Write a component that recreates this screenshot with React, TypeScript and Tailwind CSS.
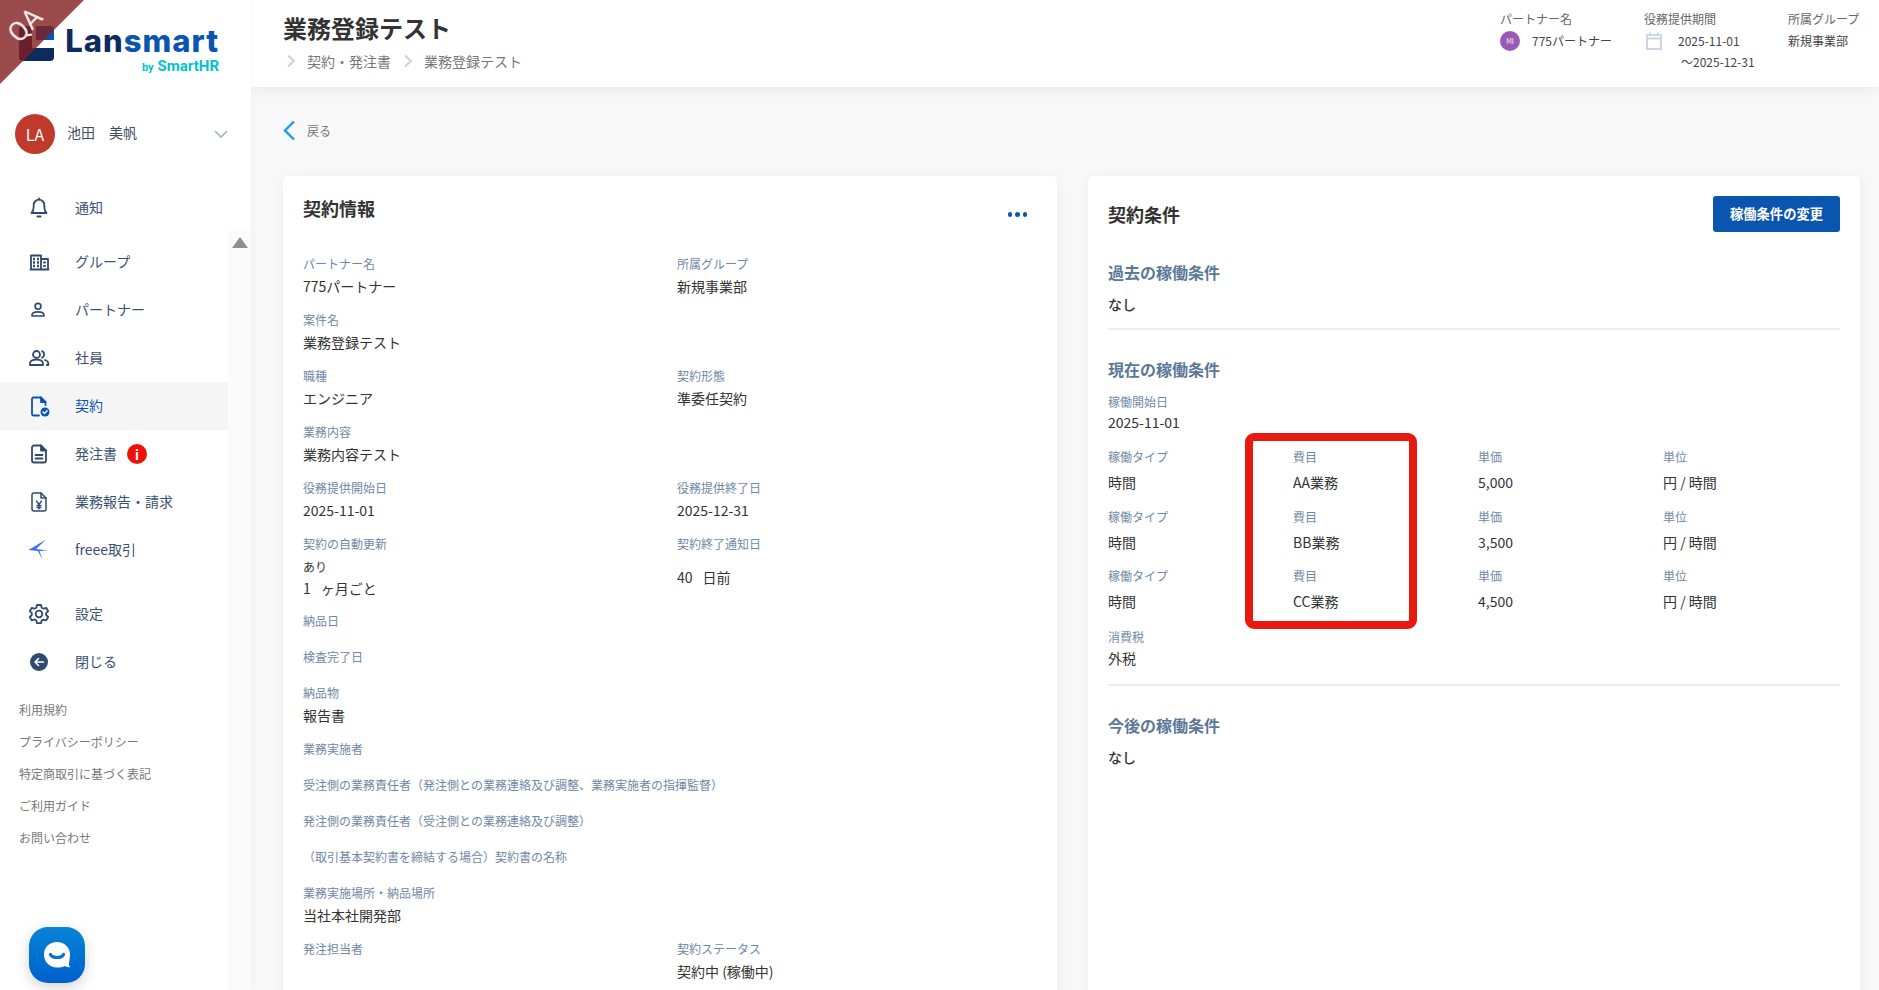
import React from "react";

const FONT = "[font-family:'Noto_Sans_CJK_JP','Noto_Sans',sans-serif]";
const NAV = "#2f4a70";

function Svg({ children, color = NAV, size = 24 }: { children: React.ReactNode; color?: string; size?: number }) {
  return (
    <svg width={size} height={size} viewBox="0 0 24 24" fill="none" stroke={color} strokeWidth="1.8" strokeLinecap="round" strokeLinejoin="round">
      {children}
    </svg>
  );
}

const icons: Record<string, React.ReactNode> = {
  bell: (
    <Svg>
      <path d="M4.500 17h15c-1.500-1.500-2.200-3-2.200-6.500V9a5.300 5.300 0 0 0-10.600 0v1.500c0 3.500-.7 5-2.200 6.500z" />
      <path d="M10.500 20.500h3" strokeWidth="2" />
      <path d="M12 2.500v1" />
    </Svg>
  ),
  building: (
    <Svg>
      <path d="M4 19.500V5.500h10v14M14 9h7v10.500M3.500 19.500h18" />
      <path d="M7 8.500v1M11 8.500v1M7 12v1M11 12v1M7 15.500v1M11 15.500v1M17 12.500h1M17 16h1" strokeWidth="2" />
    </Svg>
  ),
  user: (
    <Svg size={22}>
      <circle cx="12" cy="8" r="3.200" />
      <path d="M5.500 18.500v-1c0-2 2.500-3.500 6.500-3.500s6.500 1.500 6.500 3.500v1z" />
    </Svg>
  ),
  users: (
    <Svg>
      <circle cx="9.500" cy="8.500" r="3.500" />
      <path d="M3 19v-1.500c0-2.300 2.700-3.800 6.500-3.800s6.500 1.500 6.500 3.800V19z" />
      <path d="M15 5.200a3.500 3.500 0 0 1 0 6.500M18 14c2 .6 3.300 1.800 3.300 3.500V19h-1.500" />
    </Svg>
  ),
  contract: (
    <Svg color="#0a55b0">
      <path d="M14 3.500H6.500a1.500 1.500 0 0 0-1.500 1.500v15a1.500 1.500 0 0 0 1.500 1.500H12" />
      <path d="M14 3.500V8h4.500L14 3.500z" fill="#0a55b0" />
      <path d="M18.500 8v3" />
      <circle cx="18" cy="18" r="4.500" fill="#0a55b0" stroke="none" />
      <path d="M16 18l1.500 1.500 2.600-2.800" stroke="#fff" strokeWidth="1.400" />
    </Svg>
  ),
  doc: (
    <Svg>
      <path d="M14 3.500H7a2 2 0 0 0-2 2v13a2 2 0 0 0 2 2h10a2 2 0 0 0 2-2V8.500L14 3.500z" />
      <path d="M14 3.500v5h5" fill={NAV} />
      <path d="M8.500 13h7M8.500 16.500h7" />
    </Svg>
  ),
  yen: (
    <Svg>
      <path d="M14 3H7a2 2 0 0 0-2 2v14a2 2 0 0 0 2 2h10a2 2 0 0 0 2-2V8l-5-5z" strokeWidth="1.500" />
      <path d="M14 3v5h5" strokeWidth="1.500" />
      <path d="M9.500 11l2.500 3.500 2.500-3.500M12 14.500V19M10 15.500h4M10 17.500h4" strokeWidth="1.300" />
    </Svg>
  ),
  freee: (
    <svg width="24" height="24" viewBox="0 0 24 24" fill="#3d6ff0">
      <path d="M19 1.500 1.500 12 11 13 15.500 22 12.500 13 21 12.500 9 11z" />
    </svg>
  ),
  gear: (
    <Svg>
      <path d="M10 3h4l.7 2.800 1.800.9 2.700-.9 2 3.400-2.100 2 .1 1.800 2 2-2 3.400-2.700-.8-1.800 1-.7 2.600h-4l-.7-2.700-1.800-1-2.700.9-2-3.400 2-2v-1.900l-2-1.900 2-3.400 2.700.9 1.800-1z" />
      <circle cx="12" cy="12" r="3.300" />
    </Svg>
  ),
  close: (
    <svg width="24" height="24" viewBox="0 0 24 24">
      <circle cx="12" cy="12" r="9" fill={NAV} />
      <path d="M16.500 12h-8M11.500 8.500 8 12l3.500 3.500" stroke="#fff" strokeWidth="1.600" fill="none" strokeLinecap="round" strokeLinejoin="round" />
    </svg>
  ),
};

function NavItem({ icon, label, active, badge, className = "" }: { icon: string; label: string; active?: boolean; badge?: boolean; className?: string }) {
  return (
    <div className={`flex h-[48px] w-[228px] items-center pl-[27px] ${active ? "bg-[#f5f5f5]" : ""} ${className}`}>
      <span className="flex w-[48px] shrink-0 items-center">{icons[icon]}</span>
      <span className={`-mt-[1px] text-[14px] ${active ? "text-[#0a55b0]" : "text-[#3a5274]"}`}>{label}</span>
      {badge && (
        <span className="ml-[10px] flex h-[20px] w-[20px] items-center justify-center rounded-full bg-[#ec1208] text-[13px] font-bold leading-none text-white">i</span>
      )}
    </div>
  );
}

function Field({ label, value, className = "", gap = "mt-[3px]" }: { label: string; value?: React.ReactNode; className?: string; gap?: string }) {
  return (
    <div className={className}>
      <div className="h-[18px] text-[12px] leading-[18px] text-[#6f88a6]">{label}</div>
      {value !== undefined && <div className={`${gap} h-[20px] text-[14px] leading-[20px] text-[#333]`}>{value}</div>}
    </div>
  );
}

function Row({ l, r, value, lv }: { l: string; r?: string; value?: string; lv?: string }) {
  return (
    <div className="mb-[15px] grid grid-cols-[374px_1fr]">
      <Field label={l} value={lv} />
      {r ? <Field label={r} value={value} /> : <div />}
    </div>
  );
}

function Blank({ label }: { label: string }) {
  return <div className="mb-[18px]"><Field label={label} /></div>;
}

function Rate({ label, value }: { label: string; value: string }) {
  return (
    <div>
      <div className="h-[18px] text-[12px] leading-[18px] text-[#6f88a6]">{label}</div>
      <div className="mt-[6px] h-[20px] text-[14px] leading-[20px] text-[#333]">{value}</div>
    </div>
  );
}

function RateRow({ name, price, mb }: { name: string; price: string; mb: string }) {
  return (
    <div className={`grid grid-cols-[185px_185px_185px_1fr] ${mb}`}>
      <Rate label="稼働タイプ" value="時間" />
      <Rate label="費目" value={name} />
      <Rate label="単価" value={price} />
      <Rate label="単位" value="円 / 時間" />
    </div>
  );
}

function SectionTitle({ children }: { children: React.ReactNode }) {
  return <div className="h-[24px] text-[16px] font-bold leading-[24px] text-[#5b7898]">{children}</div>;
}

function Chevron({ className = "" }: { className?: string }) {
  return (
    <svg width="10" height="14" viewBox="0 0 10 14" fill="none" stroke="#c5d3e3" strokeWidth="2" className={className}>
      <path d="M2 1.500 8 7l-6 5.500" />
    </svg>
  );
}

export default function App() {
  return (
    <div className={`relative flex h-[990px] w-full overflow-hidden bg-[#f8f8f8] ${FONT}`}>
      <aside className="relative z-10 h-full w-[251px] shrink-0 bg-white shadow-[0_0_8px_rgba(0,0,0,0.04)]">
        <div className="absolute bottom-0 left-[228px] top-[230px] w-[23px] bg-[#fbfbfb]">
          <div className="ml-[4px] mt-[7px] h-0 w-0 border-x-[8px] border-b-[11px] border-x-transparent border-b-[#8f8f8f]" />
        </div>

        <div className="flex h-[87px] items-start pl-[19px] pt-[26px]">
          <svg width="35" height="35" viewBox="0 0 35 35" className="shrink-0">
            <path d="M17 0h14a4 4 0 0 1 4 4v10H17z" fill="#0a55b0" />
            <path d="M0 4a4 4 0 0 1 4-4h9v22h22v9a4 4 0 0 1-4 4H4a4 4 0 0 1-4-4z" fill="#0d2b5e" />
            <path d="M13 18h22v4H13z" fill="#fff" />
          </svg>
          <div className="ml-[12px] flex w-[153px] flex-col items-end">
            <div className="-mt-[3px] h-[36px] whitespace-nowrap text-[31px] font-extrabold leading-[36px] tracking-[1px] [font-family:'Inter',sans-serif]">
              <span className="text-[#0d2b5e]">Lan</span>
              <span className="text-[#0a55b0]">smart</span>
            </div>
            <div className="-mt-[1px] flex items-baseline whitespace-nowrap font-bold leading-[16px] text-[#00c3d0] [font-family:'Roboto',sans-serif]">
              <span className="mr-[4px] text-[11px]">by</span>
              <span className="text-[15px]">SmartHR</span>
            </div>
          </div>
        </div>

        <div className="mt-[27px] flex h-[40px] items-center pl-[15px]">
          <div className="flex h-[40px] w-[40px] items-center justify-center rounded-full bg-[#c0392b] pb-[1px] text-[16px] text-white">LA</div>
          <span className="-mt-[3px] ml-[12px] w-[147px] text-[14px] text-[#3f4d60]">池田　美帆</span>
          <svg width="14" height="9" viewBox="0 0 14 9" fill="none" stroke="#a9b1bb" strokeWidth="1.600"><path d="M1 1l6 6 6-6" /></svg>
        </div>

        <nav className="mt-[30px]">
          <NavItem icon="bell" label="通知" className="mb-[6px]" />
          <NavItem icon="building" label="グループ" />
          <NavItem icon="user" label="パートナー" />
          <NavItem icon="users" label="社員" />
          <NavItem icon="contract" label="契約" active />
          <NavItem icon="doc" label="発注書" badge />
          <NavItem icon="yen" label="業務報告・請求" />
          <NavItem icon="freee" label="freee取引" />
          <NavItem icon="gear" label="設定" className="mt-[16px]" />
          <NavItem icon="close" label="閉じる" />
        </nav>

        <div className="mt-[8px] pl-[19px]">
          {["利用規約", "プライバシーポリシー", "特定商取引に基づく表記", "ご利用ガイド", "お問い合わせ"].map((t) => (
            <div key={t} className="h-[32px] text-[12px] leading-[32px] text-[#777]">{t}</div>
          ))}
        </div>

        <div className="absolute left-[29px] top-[927px] flex h-[56px] w-[56px] items-center justify-center rounded-[19px] bg-gradient-to-b from-[#0a84d6] to-[#0060cc] shadow-[0_4px_14px_rgba(0,0,0,0.18)]">
          <svg width="32" height="32" viewBox="0 0 32 32">
            <path d="M16 3c7.500 0 13 5.500 13 12.500 0 3.500-1 6.500-1 10 0 1 .5 2 1.500 2.500-2.500.5-4.500 0-5.500-1-2 1-5 1.500-8 1.500C8.500 28.500 3 23 3 15.500S8.500 3 16 3z" fill="#fff" />
            <path d="M9.500 15.500c2 4 11 4 13 0" stroke="#0a72d2" strokeWidth="3.200" fill="none" strokeLinecap="round" />
          </svg>
        </div>
      </aside>

      <main className="flex min-w-0 flex-1 flex-col">
        <header className="relative z-[5] flex h-[87px] shrink-0 justify-between bg-white pl-[32px] shadow-[0_2px_12px_rgba(0,0,0,0.07)]">
          <div>
            <h1 className="mt-[10px] h-[36px] text-[24px] font-bold leading-[36px] text-[#333]">業務登録テスト</h1>
            <div className="mt-[4px] flex h-[22px] items-center text-[14px] text-[#777]">
              <Chevron className="ml-[3px]" />
              <span className="ml-[11px]">契約・発注書</span>
              <Chevron className="ml-[12px]" />
              <span className="ml-[11px]">業務登録テスト</span>
            </div>
          </div>
          <div className="flex pr-[19px] pt-[10px] text-[12px] text-[#444]">
            <div className="w-[144px]">
              <div className="h-[18px] leading-[18px] text-[#666]">パートナー名</div>
              <div className="mt-[3px] flex h-[20px] items-center">
                <span className="flex h-[20px] w-[20px] items-center justify-center rounded-full bg-[#9b59b6] text-[7px] text-[#eee]">MI</span>
                <span className="ml-[12px]">775パートナー</span>
              </div>
            </div>
            <div className="w-[144px]">
              <div className="h-[18px] leading-[18px] text-[#666]">役務提供期間</div>
              <div className="mt-[3px] flex h-[20px] items-center">
                <svg width="20" height="20" viewBox="0 0 20 20" fill="none" stroke="#ccd7e5" strokeWidth="2"><path d="M3 4h14v14H3zM3 7.500h14" /><path d="M6 1.500V4M14 1.500V4" /></svg>
                <span className="ml-[14px]">2025-11-01</span>
              </div>
              <div className="mt-[1px] h-[20px] pl-[37px] leading-[20px]">～2025-12-31</div>
            </div>
            <div className="w-[72px]">
              <div className="h-[18px] leading-[18px] text-[#666]">所属グループ</div>
              <div className="mt-[3px] h-[20px] leading-[20px]">新規事業部</div>
            </div>
          </div>
        </header>

        <div className="flex-1 overflow-hidden pl-[32px] pr-[19px]">
          <div className="flex h-[89px] items-start pt-[33px]">
            <svg width="13" height="21" viewBox="0 0 13 21" fill="none" stroke="#1a9bf0" strokeWidth="2.400"><path d="M11 1.500 2 10.500l9 9" /></svg>
            <span className="ml-[11px] text-[12px] leading-[21px] text-[#777]">戻る</span>
          </div>

          <div className="flex gap-[31px]">
            <section className="h-[900px] w-[774px] shrink-0 rounded-[5px] bg-white px-[20px] shadow-[0_2px_14px_rgba(0,0,0,0.05)]">
              <div className="flex h-[79px] items-start justify-between pt-[18px]">
                <h2 className="h-[28px] text-[18px] font-bold leading-[28px] text-[#333]">契約情報</h2>
                <div className="mr-[10px] mt-[18px] flex gap-[3px]">
                  <span className="h-[4.500px] w-[4.500px] rounded-full bg-[#0a55b0]" />
                  <span className="h-[4.500px] w-[4.500px] rounded-full bg-[#0a55b0]" />
                  <span className="h-[4.500px] w-[4.500px] rounded-full bg-[#0a55b0]" />
                </div>
              </div>
              <Row l="パートナー名" lv="775パートナー" r="所属グループ" value="新規事業部" />
              <Row l="案件名" lv="業務登録テスト" />
              <Row l="職種" lv="エンジニア" r="契約形態" value="準委任契約" />
              <Row l="業務内容" lv="業務内容テスト" />
              <Row l="役務提供開始日" lv="2025-11-01" r="役務提供終了日" value="2025-12-31" />
              <div className="mb-[14px] grid grid-cols-[374px_1fr]">
                <div>
                  <div className="h-[18px] text-[12px] leading-[18px] text-[#6f88a6]">契約の自動更新</div>
                  <div className="mt-[5px] h-[18px] text-[12px] leading-[18px] text-[#333]">あり</div>
                  <div className="mt-[2px] h-[20px] text-[14px] leading-[20px] text-[#333]">1<span className="ml-[10px]">ヶ月ごと</span></div>
                </div>
                <div>
                  <div className="h-[18px] text-[12px] leading-[18px] text-[#6f88a6]">契約終了通知日</div>
                  <div className="mt-[14px] h-[20px] text-[14px] leading-[20px] text-[#333]">40<span className="ml-[10px]">日前</span></div>
                </div>
              </div>
              <Blank label="納品日" />
              <Blank label="検査完了日" />
              <div className="mb-[15px]"><Field label="納品物" value="報告書" /></div>
              <Blank label="業務実施者" />
              <Blank label="受注側の業務責任者（発注側との業務連絡及び調整、業務実施者の指揮監督）" />
              <Blank label="発注側の業務責任者（受注側との業務連絡及び調整）" />
              <Blank label="（取引基本契約書を締結する場合）契約書の名称" />
              <div className="mb-[15px]"><Field label="業務実施場所・納品場所" value="当社本社開発部" /></div>
              <Row l="発注担当者" r="契約ステータス" value="契約中 (稼働中)" />
            </section>

            <section className="relative h-[900px] min-w-0 flex-1 rounded-[5px] bg-white px-[20px] shadow-[0_2px_14px_rgba(0,0,0,0.05)]">
              <div className="flex h-[84px] items-start justify-between pt-[20px]">
                <h2 className="mt-[4px] h-[28px] text-[18px] font-bold leading-[28px] text-[#333]">契約条件</h2>
                <button className="h-[36px] w-[127px] rounded-[3px] bg-[#0a55b0] text-[13.300px] font-bold text-white">稼働条件の変更</button>
              </div>
              <SectionTitle>過去の稼働条件</SectionTitle>
              <div className="mt-[10px] h-[20px] text-[14px] font-medium leading-[20px] text-[#333]">なし</div>
              <div className="mt-[14px] border-t-2 border-[#ececec]" />

              <div className="mt-[27px]"><SectionTitle>現在の稼働条件</SectionTitle></div>
              <div className="mt-[12px]"><Field label="稼働開始日" value="2025-11-01" gap="mt-[1px]" /></div>
              <div className="mt-[16px]">
                <RateRow name="AA業務" price="5,000" mb="mb-[16px]" />
                <RateRow name="BB業務" price="3,500" mb="mb-[15px]" />
                <RateRow name="CC業務" price="4,500" mb="mb-[17px]" />
              </div>
              <Field label="消費税" value="外税" gap="mt-[2px]" />
              <div className="mt-[16px] border-t-2 border-[#ececec]" />

              <div className="mt-[27px]"><SectionTitle>今後の稼働条件</SectionTitle></div>
              <div className="mt-[10px] h-[20px] text-[14px] font-medium leading-[20px] text-[#333]">なし</div>

              <div className="absolute left-[157px] top-[257px] h-[196px] w-[172px] rounded-[9px] border-[8px] border-[#e8190f]" />
            </section>
          </div>
        </div>
      </main>

      <div className="pointer-events-none absolute left-0 top-0 z-20 h-[84px] w-[84px] bg-[rgba(130,30,30,0.8)] [clip-path:polygon(0_0,100%_0,0_100%)]" />
      <div className="pointer-events-none absolute left-[7px] top-[10px] z-20 -rotate-45 text-[27px] leading-[30px] text-[rgba(255,255,255,0.9)] [font-family:'Roboto',sans-serif]">QA</div>
    </div>
  );
}
